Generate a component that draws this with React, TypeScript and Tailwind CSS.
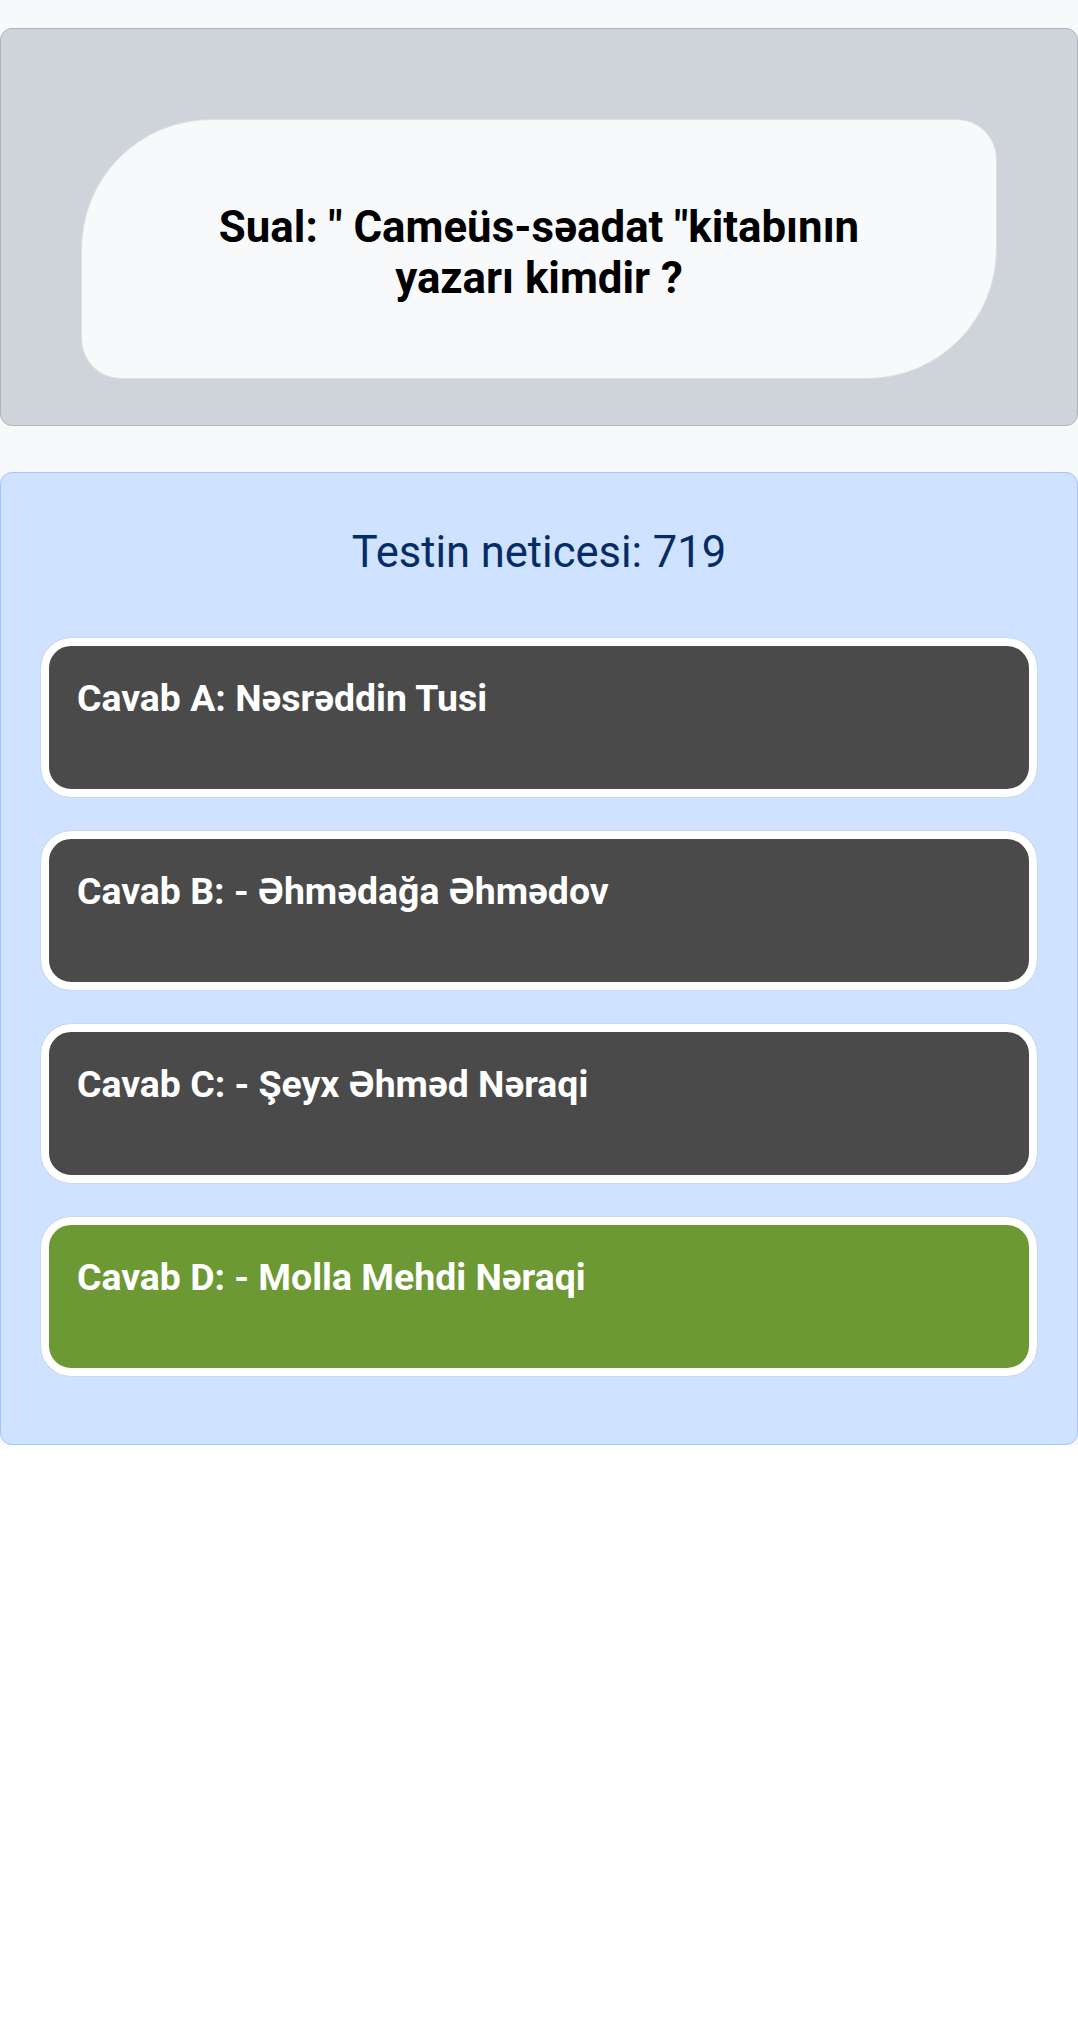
import React from "react";

const answers = [
  { label: "Cavab A: Nəsrəddin Tusi", correct: false },
  { label: "Cavab B: - Əhmədağa Əhmədov", correct: false },
  { label: "Cavab C: - Şeyx Əhməd Nəraqi", correct: false },
  { label: "Cavab D: - Molla Mehdi Nəraqi", correct: true },
];

export default function App() {
  return (
    <div className="min-h-screen bg-white font-['Roboto','Liberation_Sans',sans-serif]">
      <div className="bg-[#f8f9fa] pt-[28px]">
        {/* Question */}
        <div className="rounded-[12px] border border-[#adb5bd] bg-[#ced4da] px-[80px] pt-[90px] pb-[46px]">
          <div className="flex h-[260px] items-center justify-center rounded-tl-[130px] rounded-tr-[40px] rounded-br-[130px] rounded-bl-[40px] border border-[#dcdfe2] bg-[#f8f9fa] pt-[8px]">
            <h1 className="max-w-[720px] text-center text-[43.8px] font-bold leading-[51px] text-black">
              Sual: " Cameüs-səadat "kitabının yazarı kimdir ?
            </h1>
          </div>
        </div>

        {/* Result */}
        <div className="mt-[46px] rounded-[12px] border border-[#9ec5fe] bg-[#cfe2ff] px-10 pt-[54px] pb-[68px]">
          <h2 className="mb-[59px] text-center text-[43.5px] font-normal leading-[52px] text-[#052c65]">
            Testin neticesi: 719
          </h2>
          <div className="flex flex-col gap-[34px]">
            {answers.map((a, i) => (
              <div
                key={i}
                className={
                  "h-[159px] rounded-[30px] border-[8px] border-white pt-[27px] pl-[28px] text-[37.4px] font-bold leading-[50px] text-white shadow-[0_0_1px_rgba(0,0,0,0.35)] " +
                  (a.correct ? "bg-[#6d9935]" : "bg-[#4a4a4a]")
                }
              >
                {a.label}
              </div>
            ))}
          </div>
        </div>
      </div>
    </div>
  );
}
